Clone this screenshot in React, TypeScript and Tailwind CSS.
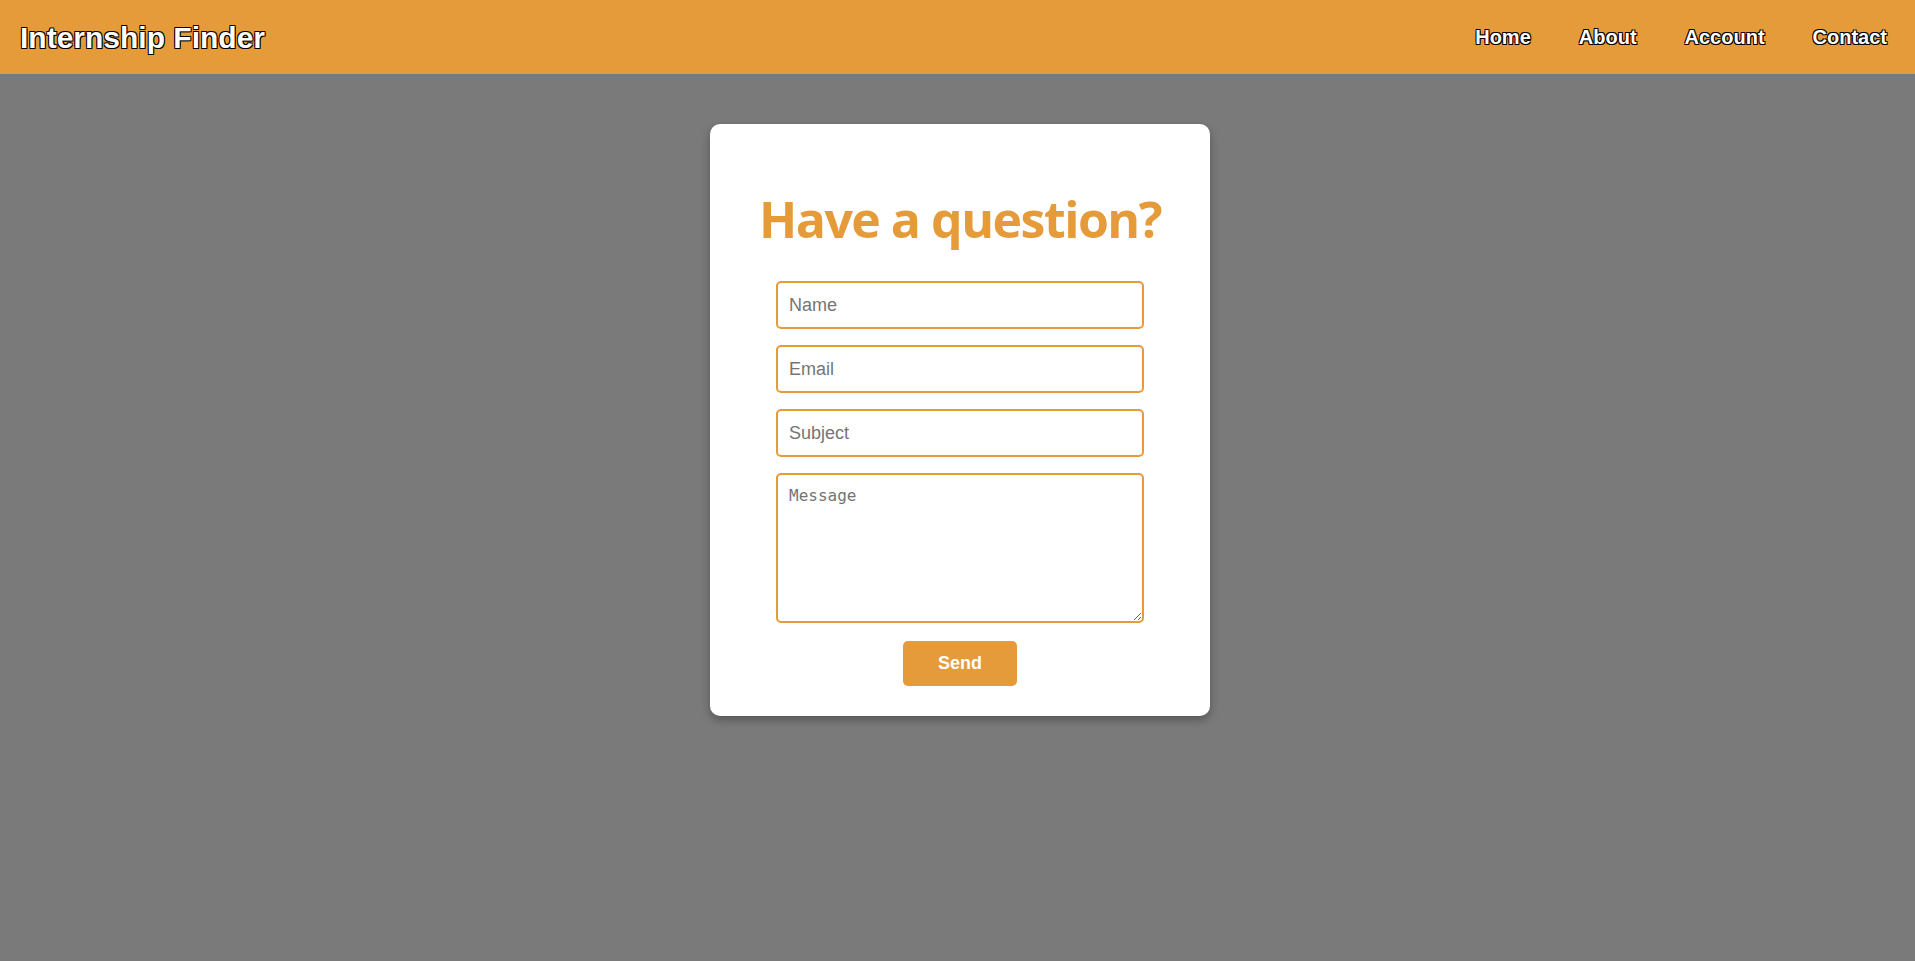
const outline =
  "[text-shadow:-1px_1px_0_#000,1px_1px_0_#000,-1px_-1px_0_#000,1px_-1px_0_#111]";

const Header = () => {
  return (
    <div className="w-full h-[74px] bg-[#e69b3a] flex justify-between items-center pl-5 pr-[28px] font-['Liberation_Sans',Arial,sans-serif]">
      <div className={`text-[30px] font-bold text-white ${outline}`}>Internship Finder</div>
      <nav className={`flex gap-[48px] text-[20px] font-bold text-white ${outline}`}>
        <a className="cursor-pointer">Home</a>
        <a className="cursor-pointer">About</a>
        <a className="cursor-pointer">Account</a>
        <a className="cursor-pointer">Contact</a>
      </nav>
    </div>
  );
};

const inputCls =
  "w-full h-[48px] border-2 border-[#e69b3a] rounded-[5px] px-[11px] text-[18px] font-['Liberation_Sans',Arial,sans-serif] placeholder:text-[#757575] outline-none bg-white";

export default function App() {
  return (
    <div className="min-h-screen bg-[#7a7a7a] flex flex-col">
      <Header />
      <div className="flex justify-center pt-[50px] pl-[5px]">
        <div className="w-[500px] bg-white rounded-[10px] shadow-[0_4px_10px_rgba(0,0,0,0.3)] flex flex-col items-center pt-[65px] pb-[30px]">
          <h1 className="text-[50px] leading-[1.2] font-bold text-[#e69b3a] font-['Open_Sans',sans-serif] tracking-[-1.5px]">
            Have a question?
          </h1>
          <form className="w-[368px] flex flex-col gap-[16px] mt-[32px]">
            <input className={inputCls} placeholder="Name" />
            <input className={inputCls} placeholder="Email" />
            <input className={inputCls} placeholder="Subject" />
            <textarea
              className="w-full h-[150px] border-2 border-[#e69b3a] rounded-[5px] px-[11px] py-[9px] text-[16px] font-['DejaVu_Sans_Mono',monospace] placeholder:text-[#757575] outline-none"
              placeholder="Message"
            />
            <div className="flex justify-center mt-[2px]">
              <button
                type="button"
                className="w-[114px] h-[45px] bg-[#e69b3a] rounded-[5px] text-white text-[18px] font-bold font-['Liberation_Sans',Arial,sans-serif]"
              >
                Send
              </button>
            </div>
          </form>
        </div>
      </div>
    </div>
  );
}
